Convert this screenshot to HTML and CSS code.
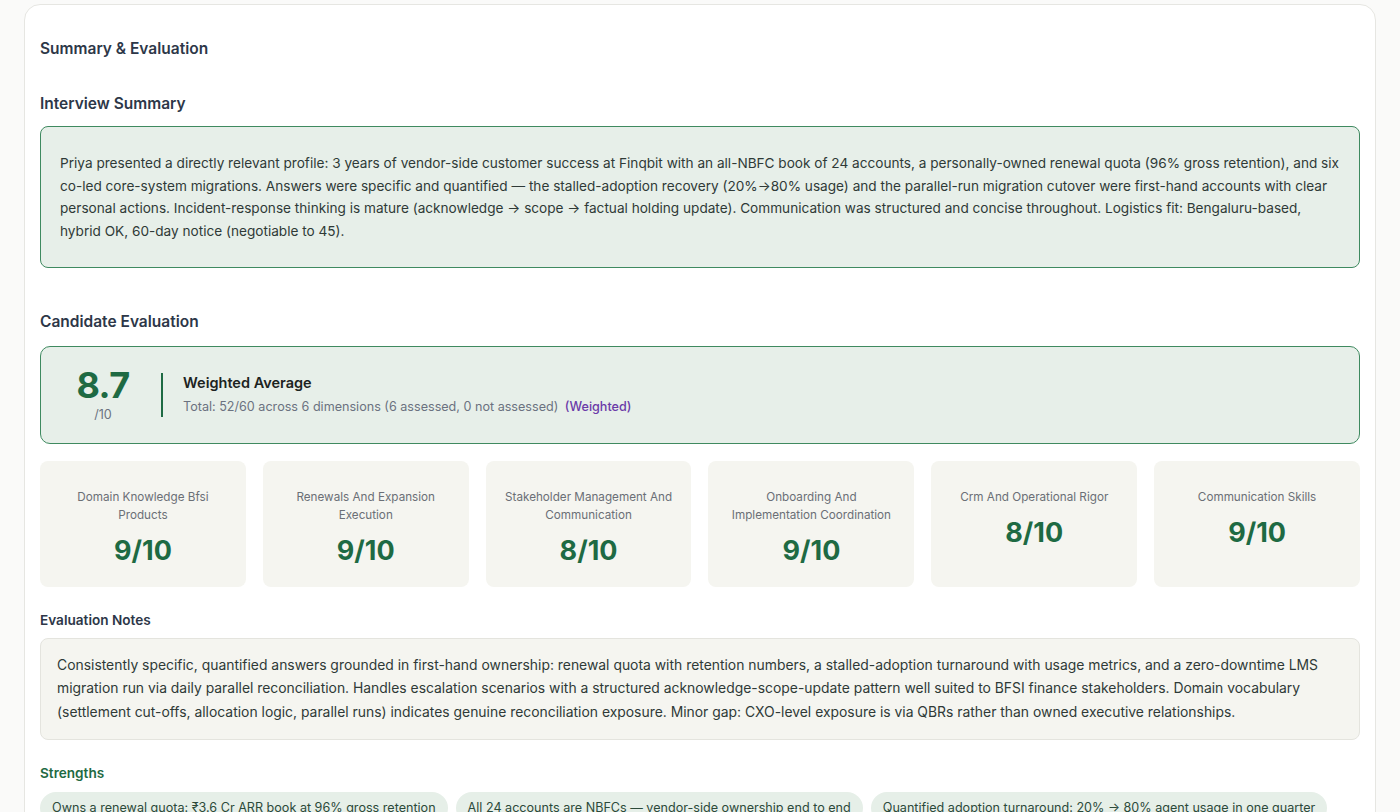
FILE: index.html
```html
<!DOCTYPE html>
<html lang="en">
<head>
<meta charset="utf-8">
<title>Summary & Evaluation</title>
<link rel="stylesheet" href="styles.css">
</head>
<body>
<div class="page">
  <section class="card">
    <h1 class="title">Summary &amp; Evaluation</h1>

    <h2 class="section-title">Interview Summary</h2>
    <div class="summary-box">
      <p>Priya presented a directly relevant profile: 3 years of vendor-side customer success at Finqbit with an all-NBFC book of 24 accounts, a personally-owned renewal quota (96% gross retention), and six co-led core-system migrations. Answers were specific and quantified — the stalled-adoption recovery (20%→80% usage) and the parallel-run migration cutover were first-hand accounts with clear personal actions. Incident-response thinking is mature (acknowledge → scope → factual holding update). Communication was structured and concise throughout. Logistics fit: Bengaluru-based, hybrid OK, 60-day notice (negotiable to 45).</p>
    </div>

    <h2 class="section-title eval-title">Candidate Evaluation</h2>
    <div class="score-box">
      <div class="score-main">
        <div class="score-value">8.7</div>
        <div class="score-out">/10</div>
      </div>
      <div class="score-divider"></div>
      <div class="score-info">
        <div class="score-label">Weighted Average</div>
        <div class="score-desc">Total: 52/60 across 6 dimensions (6 assessed, 0 not assessed) <span class="weighted">(Weighted)</span></div>
      </div>
    </div>

    <div class="dims">
      <div class="dim"><div class="dim-label">Domain Knowledge Bfsi Products</div><div class="dim-score">9/10</div></div>
      <div class="dim"><div class="dim-label">Renewals And Expansion Execution</div><div class="dim-score">9/10</div></div>
      <div class="dim"><div class="dim-label">Stakeholder Management And Communication</div><div class="dim-score">8/10</div></div>
      <div class="dim"><div class="dim-label">Onboarding And Implementation Coordination</div><div class="dim-score">9/10</div></div>
      <div class="dim"><div class="dim-label">Crm And Operational Rigor</div><div class="dim-score">8/10</div></div>
      <div class="dim"><div class="dim-label">Communication Skills</div><div class="dim-score">9/10</div></div>
    </div>

    <h3 class="sub-title">Evaluation Notes</h3>
    <div class="notes-box">
      <p>Consistently specific, quantified answers grounded in first-hand ownership: renewal quota with retention numbers, a stalled-adoption turnaround with usage metrics, and a zero-downtime LMS migration run via daily parallel reconciliation. Handles escalation scenarios with a structured acknowledge-scope-update pattern well suited to BFSI finance stakeholders. Domain vocabulary (settlement cut-offs, allocation logic, parallel runs) indicates genuine reconciliation exposure. Minor gap: CXO-level exposure is via QBRs rather than owned executive relationships.</p>
    </div>

    <h3 class="sub-title strengths-title">Strengths</h3>
    <div class="chips">
      <span class="chip">Owns a renewal quota: ₹3.6 Cr ARR book at 96% gross retention</span>
      <span class="chip">All 24 accounts are NBFCs — vendor-side ownership end to end</span>
      <span class="chip">Quantified adoption turnaround: 20% → 80% agent usage in one quarter</span>
    </div>
  </section>
</div>
</body>
</html>
```

FILE: styles.css
```css
* { box-sizing: border-box; }
html, body { margin: 0; padding: 0; }
body {
  background: #fafaf9;
  font-family: Inter, "Noto Sans", "Liberation Sans", sans-serif;
  color: #2d3748;
}
.page {
  padding: 4px 24px 0 24px;
}
.card {
  background: #ffffff;
  border: 1px solid #e6e6e2;
  border-radius: 16px;
  padding: 32px 15px 40px 15px;
  min-height: 900px;
}
.title {
  margin: 0;
  font-size: 15.5px;
  line-height: 24px;
  font-weight: 600;
  color: #2d3748;
}
.section-title {
  margin: 31px 0 10px 0;
  font-size: 15.5px;
  line-height: 24px;
  font-weight: 600;
  color: #2d3748;
}
.eval-title { margin-top: 42px; margin-bottom: 12px; }
.summary-box {
  background: #e7efe9;
  border: 1px solid #3f8a60;
  border-radius: 8px;
  padding: 25px 19px 24px 19px;
}
.summary-box p {
  margin: 0;
  font-size: 13.62px;
  line-height: 22.7px;
  color: #2f3a37;
}
.score-box {
  display: flex;
  align-items: center;
  background: #e7efe9;
  border: 1px solid #3f8a60;
  border-radius: 10px;
  height: 98px;
  padding: 0 24px;
}
.score-main {
  width: 76px;
  text-align: center;
  display: flex;
  flex-direction: column;
  align-items: center;
}
.score-value {
  font-size: 36px;
  line-height: 40px;
  font-weight: 700;
  color: #1e6a43;
  letter-spacing: -0.5px;
}
.score-out {
  font-size: 12.6px;
  line-height: 18px;
  color: #6b7280;
  margin-top: 1px;
}
.score-divider {
  width: 2px;
  height: 44px;
  background: #1e6a43;
  margin: 0 20px;
}
.score-label {
  font-size: 14.5px;
  line-height: 20px;
  font-weight: 600;
  color: #1c2321;
  margin-bottom: 5px;
}
.score-desc {
  font-size: 12.6px;
  line-height: 18px;
  color: #6b7280;
}
.weighted {
  color: #6b3aa8;
  font-weight: 500;
  margin-left: 3px;
}
.dims {
  display: grid;
  grid-template-columns: repeat(6, 1fr);
  gap: 17px;
  margin-top: 17px;
}
.dim {
  background: #f5f5f0;
  border-radius: 8px;
  padding: 27px 16px 20px 16px;
  text-align: center;
  min-height: 125px;
}
.dim-label {
  font-size: 11.7px;
  line-height: 18px;
  color: #6b6f76;
}
.dim-score {
  margin-top: 11px;
  font-size: 27px;
  line-height: 32px;
  font-weight: 700;
  color: #1e6a43;
}
.sub-title {
  margin: 23px 0 8px 0;
  font-size: 13.6px;
  line-height: 20px;
  font-weight: 600;
  color: #2d3748;
}
.notes-box {
  background: #f5f5f0;
  border: 1px solid #e4e4de;
  border-radius: 8px;
  padding: 15px 16px;
}
.notes-box p {
  margin: 0;
  font-size: 13.9px;
  line-height: 23.5px;
  color: #2f3a37;
}
.strengths-title {
  color: #1e6a43;
  margin-top: 23px;
  margin-bottom: 9px;
}
.chips {
  display: flex;
  flex-wrap: wrap;
  gap: 8px;
}
.chip {
  background: #e6efe8;
  border-radius: 16px;
  padding: 6px 12px;
  font-size: 12.6px;
  line-height: 20px;
  color: #2c4a3a;
}
```
